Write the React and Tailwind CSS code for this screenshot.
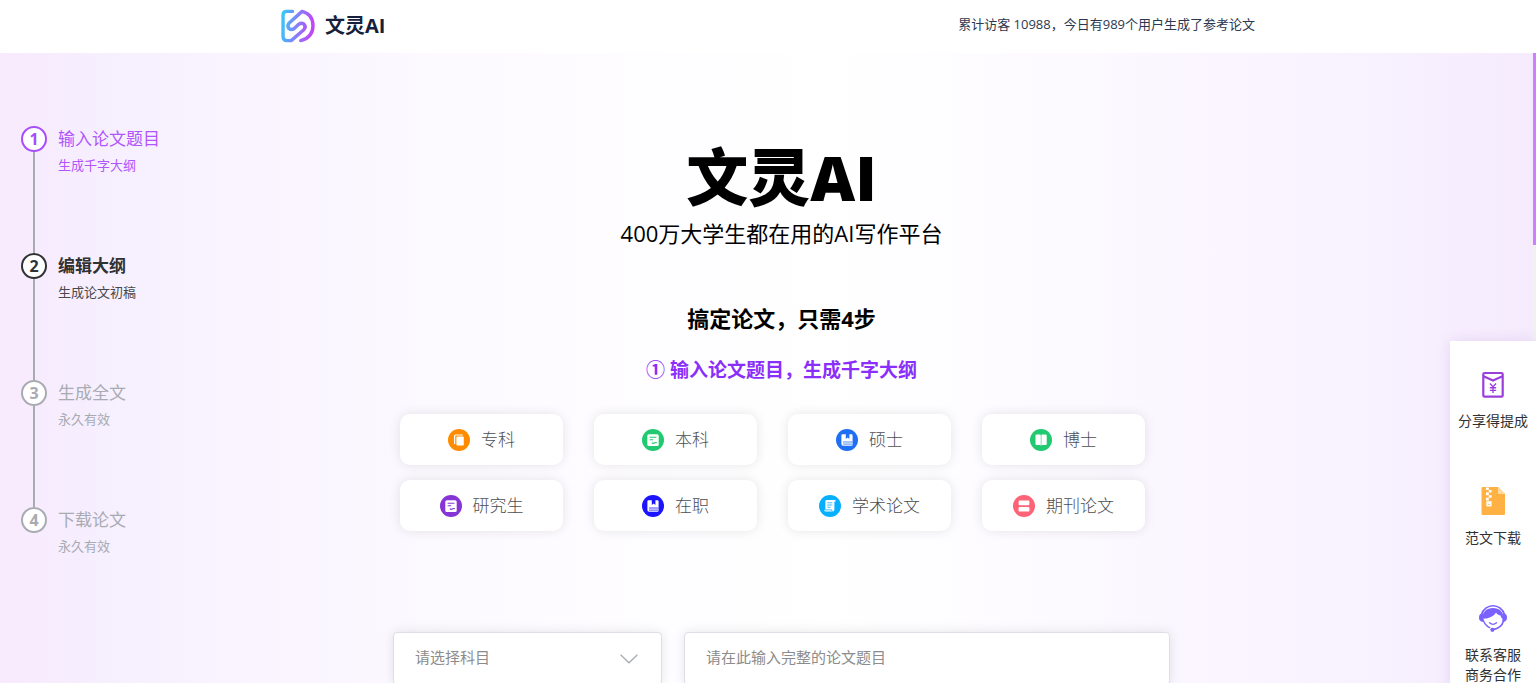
const steps = [
  { title: "输入论文题目", note: "生成千字大纲", tone: "active" },
  { title: "编辑大纲", note: "生成论文初稿", tone: "next" },
  { title: "生成全文", note: "永久有效", tone: "idle" },
  { title: "下载论文", note: "永久有效", tone: "idle" },
];

const tones = {
  active: { ring: "border-[#a94dfb] text-[#a94dfb]", title: "text-[#b056fb]", note: "text-[#b056fb]" },
  next: { ring: "border-[#303133] text-[#303133]", title: "text-[#303133] font-bold", note: "text-[#47484b]" },
  idle: { ring: "border-[#a8abb2] text-[#a8abb2]", title: "text-[#a8abb2]", note: "text-[#a8abb2]" },
};

const note = (
  <>
    <rect x="5.3" y="5.2" width="11.4" height="11.8" rx="1.6" fill="#fff" />
    <path d="M7.6 8.2h6.8M7.6 10.7h3.6M9.8 13.8q1.4 1 2.400.2t2.600-.4" fill="none" stroke="currentColor" strokeWidth="1.1" />
  </>
);
const bookmark = (
  <>
    <path d="M6.5 5.2H9.8V10l1.9-1.5L13.4 10V5.2h2q1.2 0 1.2 1.2v9q0 1.3-1.2 1.3H7q-1.6 0-1.6-1.6V6.3q0-1.1 1.1-1.1z" fill="#fff" />
    <path d="M7 13h9.6M7 15.1h9.2" stroke="currentColor" strokeWidth=".8" />
  </>
);

const levels = [
  {
    name: "专科",
    color: "text-[#ff8c00]",
    mark: (
      <>
        <path d="M6.6 15V7.2q0-1.2 1.2-1.2h7" fill="none" stroke="#fff" strokeWidth="1.2" />
        <rect x="8.4" y="7.5" width="7.4" height="9" rx="1" fill="#fff" />
      </>
    ),
  },
  { name: "本科", color: "text-[#21c971]", mark: note },
  { name: "硕士", color: "text-[#1f6ff5]", mark: bookmark },
  {
    name: "博士",
    color: "text-[#21c971]",
    mark: (
      <>
        <path d="M6.4 5.4H10q.8 0 .8.8v10.4q-.4-.6-1.4-.6h-3q-.9 0-.9-.9V6.3q0-.9.9-.9z" fill="#fff" />
        <path d="M15.8 5.4h-3.6q-.8 0-.8.8v10.4q.4-.6 1.4-.6h3q.9 0 .9-.9V6.3q0-.9-.9-.9z" fill="#fff" />
      </>
    ),
  },
  { name: "研究生", color: "text-[#8535d6]", mark: note },
  { name: "在职", color: "text-[#1d14ff]", mark: bookmark },
  {
    name: "学术论文",
    color: "text-[#06b0ff]",
    mark: (
      <>
        <path d="M7.4 5h8.2q1.4 0 1.4 1.6h-1.6v8q0 2-1.6 2H6.6q-1.6 0-1.6-1.8h1.4V6q0-1 1-1z" fill="#fff" />
        <path d="M8.3 7.8h5M8.3 10h5M8.3 12.2h3.4M5.4 14.9h7.2q.1 1.4 1 1.5" fill="none" stroke="currentColor" strokeWidth=".8" />
      </>
    ),
  },
  {
    name: "期刊论文",
    color: "text-[#ff6378]",
    mark: (
      <>
        <rect x="5.6" y="5.6" width="10.8" height="4.6" rx="1.2" fill="#fff" />
        <rect x="5.6" y="12" width="10.8" height="4.6" rx="1.2" fill="#fff" />
      </>
    ),
  },
];

function Logo() {
  return (
    <svg viewBox="0 0 100 98" className="size-[34px]" aria-hidden="true">
      <defs>
        <linearGradient id="brand" gradientUnits="userSpaceOnUse" x1="0" y1="40" x2="100" y2="55">
          <stop offset="0" stopColor="#35c8f8" />
          <stop offset=".5" stopColor="#8a7bfa" />
          <stop offset="1" stopColor="#cc3cf6" />
        </linearGradient>
      </defs>
      <g fill="none" stroke="url(#brand)" strokeWidth="10" strokeLinecap="round" strokeLinejoin="round">
        <path d="M34 6H17Q6 6 6 17V80Q6 92 17 92H30L67 60Q75 51 67 43Q60 38 52 44L38 57Q30 62 23 56Q17 48 24 40L62 6Q94 14 94 48Q94 82 58 92" />
      </g>
    </svg>
  );
}

function EnvelopeIcon() {
  return (
    <svg viewBox="0 0 30 30" className="size-[30px]" fill="none" stroke="#9b3fdc" strokeWidth="2.2" strokeLinejoin="round" aria-hidden="true">
      <rect x="5.3" y="3" width="19.4" height="23.6" rx="1.2" />
      <path d="M5.5 6.2 15 10.6l9.5-4.4" />
      <path d="m12 13.5 3 3.4 3-3.4M15 17v6M11.8 17.8h6.4M11.8 20.4h6.4" strokeWidth="1.4" />
    </svg>
  );
}

function ArchiveIcon() {
  return (
    <svg viewBox="0 2 30 30" className="size-[30px]" aria-hidden="true">
      <path d="M4.5 2H20l7 7v20q0 1-1 1H4.5q-1 0-1-1V3q0-1 1-1z" fill="#ffb144" />
      <path d="M20 2v6q0 1 1 1h6z" fill="#ffd9a0" />
      <path d="M8 2.4h2.8v2.6H8zM10.8 5h2.8v2.6h-2.8zM8 7.6h2.8v2.6H8zM10.8 10.2h2.8v2.6h-2.8zM8 12.8h2.8v2.6H8z" fill="#fff" />
      <path d="M8.4 16.2h5.2v5.2H8.4z" fill="#fff" />
      <path d="M9.8 19.4h2.4" stroke="#ffb144" strokeWidth=".8" />
    </svg>
  );
}

function AgentIcon() {
  return (
    <svg viewBox="0 2 30 30" className="size-[30px]" aria-hidden="true">
      <path d="M3.6 12.5a11.8 11.8 0 0 1 22.8 0" fill="none" stroke="#7b61ff" strokeWidth="1.7" />
      <path d="M5.2 16.8C3.8 9.600 8.8 6 15 6S26.200 9.600 24.800 16.800C23.800 16.400 23 15.600 22.600 13.400 20.600 13.200 19 12.200 18 10.400 16 14 11 16.400 7.200 16.400z" fill="#7b61ff" />
      <path d="M3.6 11.6h2v8.2h-.8Q1 19.400 1 15.700t2.600-4.100zM26.400 11.600h-2v8.200h.8q3.800-.4 3.800-4.100t-2.600-4.100z" fill="#7b61ff" />
      <path d="M5.200 18q1.800 5.800 7 7.800" fill="none" stroke="#7b61ff" strokeWidth="1.3" />
      <path d="M25.500 19q-2 7.200-10.500 8.600" fill="none" stroke="#7b61ff" strokeWidth="1.6" />
      <path d="M11.500 20.800q3.500 3.200 7 0" fill="none" stroke="#7b61ff" strokeWidth="1.3" strokeLinecap="round" />
      <circle cx="14.400" cy="27.800" r="2.100" fill="#7b61ff" />
    </svg>
  );
}

const shortcuts = [
  { icon: <EnvelopeIcon />, lines: ["分享得提成"] },
  { icon: <ArchiveIcon />, lines: ["范文下载"] },
  { icon: <AgentIcon />, lines: ["联系客服", "商务合作"] },
];

export default function App() {
  return (
    <div className="flex h-screen flex-col overflow-hidden bg-white font-['Open_Sans','Noto_Sans_CJK_SC',sans-serif]">
      <header className="h-[53px] shrink-0 bg-white">
        <div className="mx-auto flex h-full max-w-[974px] items-center justify-between pb-0.5">
          <a href="#home" className="flex items-center gap-2.5">
            <Logo />
            <span className="text-xl font-bold text-[#14203c]">文灵AI</span>
          </a>
          <p className="pb-0.5 text-[13px] text-[#2c3850]">累计访客 10988，今日有989个用户生成了参考论文</p>
        </div>
      </header>

      <div className="relative flex min-h-0 flex-1 bg-[linear-gradient(90deg,#f8eafd_0%,#f6eefe_5%,#f9f4ff_15%,#fdfbff_34%,#ffffff_54%,#fdfbff_66%,#f8f1ff_90%,#f5ebfd_100%)]">
        <div className="absolute top-0 right-0 h-full w-[3px] bg-[#f1f1f1]">
          <div className="h-48 bg-[#cc80ff]" />
        </div>

        <aside className="w-[200px] shrink-0 pt-[73px] pl-[21px]">
          <ol>
            {steps.map((step, i) => {
              const tone = tones[step.tone];
              const last = i === steps.length - 1;
              return (
                <li key={step.title} className={last ? "flex gap-[11px]" : "flex h-[127px] gap-[11px]"}>
                  <div className="flex flex-col items-center">
                    <span className={`flex size-[26px] shrink-0 items-center justify-center rounded-full border-2 bg-white text-base leading-none font-bold ${tone.ring}`}>
                      {i + 1}
                    </span>
                    {!last && <span className="w-0.5 flex-1 bg-[#a8abb2]" />}
                  </div>
                  <div>
                    <p className={`text-[17px] leading-[26px] ${tone.title}`}>{step.title}</p>
                    <p className={`text-[13px] leading-[26px] ${tone.note}`}>{step.note}</p>
                  </div>
                </li>
              );
            })}
          </ol>
        </aside>

        <main className="flex min-w-0 flex-1 flex-col items-center pt-[88px] text-center text-black">
          <h1 className="text-[62px] leading-[72px] font-black">文灵AI</h1>
          <p className="mt-1 text-[22px] leading-8">400万大学生都在用的AI写作平台</p>
          <h2 className="mt-[53px] text-[22px] leading-8 font-bold">搞定论文，只需4步</h2>
          <h3 className="mt-[22px] text-[19px] leading-7 font-bold text-[#8a2ffa]">① 输入论文题目，生成千字大纲</h3>

          <div className="mt-[30px] w-full max-w-[777px]">
            <div className="grid grid-cols-4 gap-x-[31px] gap-y-[15px] pr-[25px] pl-[7px]">
              {levels.map((level) => (
                <button
                  key={level.name}
                  type="button"
                  className="flex h-[51px] items-center justify-center gap-[11px] rounded-[10px] bg-white text-[17px] font-light text-[#4c4e52] shadow-[0_0_12px_rgba(0,0,0,0.1)]"
                >
                  <svg viewBox="0 0 22 22" className={`size-[22px] ${level.color}`} aria-hidden="true">
                    <circle cx="11" cy="11" r="11" fill="currentColor" />
                    {level.mark}
                  </svg>
                  {level.name}
                </button>
              ))}
            </div>

            <form className="mt-[101px] grid grid-cols-[269fr_486fr] gap-[22px]">
              <div className="relative">
                <select
                  aria-label="科目"
                  className="h-[53px] w-full appearance-none rounded border border-[#dcdfe6] bg-white px-[21px] pb-0.5 text-[15px] text-[#8c8c8c] shadow-[0_0_12px_rgba(0,0,0,0.1)]"
                >
                  <option>请选择科目</option>
                </select>
                <svg viewBox="0 0 18 10" className="pointer-events-none absolute top-[22px] right-6 h-2.5 w-[18px]" fill="none" stroke="#a8abb2" strokeWidth="1.3" aria-hidden="true">
                  <path d="m.6.8 8.4 8 8.4-8" />
                </svg>
              </div>
              <input
                type="text"
                aria-label="论文题目"
                placeholder="请在此输入完整的论文题目"
                className="h-[53px] w-full rounded border border-[#dcdfe6] bg-white px-[21px] pb-1 text-[15px] shadow-[0_0_12px_rgba(0,0,0,0.1)] placeholder:text-[#8c8c8c]"
              />
            </form>
          </div>
        </main>

        <div className="flex w-[173px] shrink-0 justify-end pt-72">
          <nav className="relative h-[400px] w-[86px] bg-white shadow-[0_0_14px_rgba(120,60,160,0.14)]">
            {shortcuts.map((item) => (
              <a key={item.lines[0]} href="#more" className="flex h-[117px] flex-col items-center pt-[29px] text-sm leading-5 text-[#303133]">
                {item.icon}
                <span className="mt-[11px] flex flex-col">
                  {item.lines.map((line) => (
                    <span key={line}>{line}</span>
                  ))}
                </span>
              </a>
            ))}
          </nav>
        </div>
      </div>
    </div>
  );
}
